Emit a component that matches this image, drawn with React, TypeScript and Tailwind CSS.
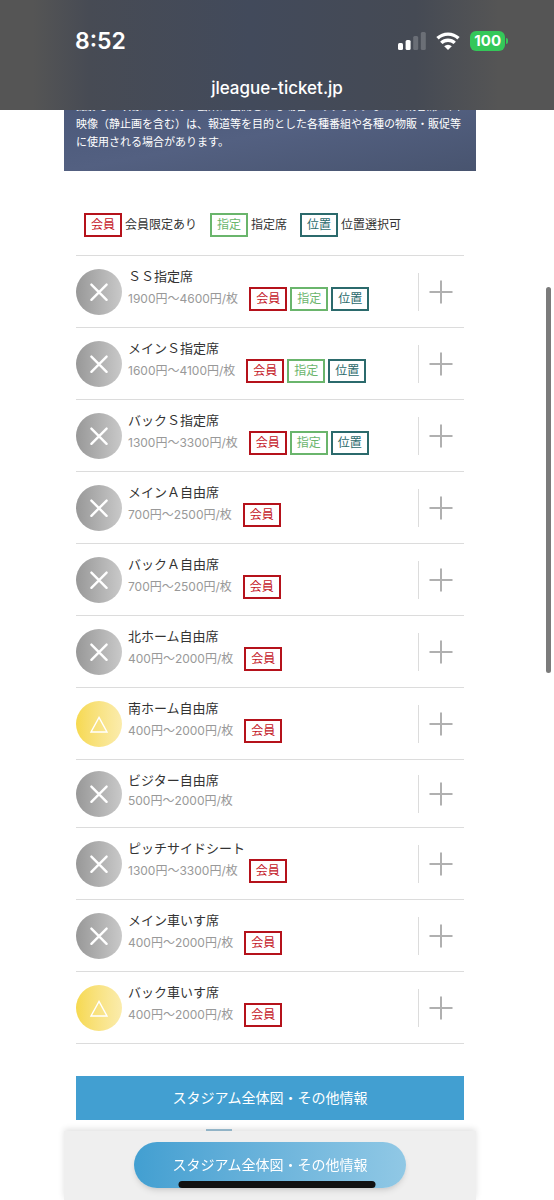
import React from "react";
import clsx from "clsx";

type Tag = "member" | "reserved" | "position";

type Seat = {
  name: string;
  price: string;
  tags: Tag[];
  few?: boolean;
};

const tagStyles: Record<Tag, { label: string; className: string }> = {
  member: { label: "会員", className: "border-[#b5121b] text-[#c4161f]" },
  reserved: { label: "指定", className: "border-[#6ab56c] text-[#6ab56c]" },
  position: { label: "位置", className: "border-[#2b6a6c] text-[#2b6a6c]" },
};

const legend: { tag: Tag; text: string }[] = [
  { tag: "member", text: "会員限定あり" },
  { tag: "reserved", text: "指定席" },
  { tag: "position", text: "位置選択可" },
];

const seats: Seat[] = [
  { name: "ＳＳ指定席", price: "1900円〜4600円/枚", tags: ["member", "reserved", "position"] },
  { name: "メインＳ指定席", price: "1600円〜4100円/枚", tags: ["member", "reserved", "position"] },
  { name: "バックＳ指定席", price: "1300円〜3300円/枚", tags: ["member", "reserved", "position"] },
  { name: "メインＡ自由席", price: "700円〜2500円/枚", tags: ["member"] },
  { name: "バックＡ自由席", price: "700円〜2500円/枚", tags: ["member"] },
  { name: "北ホーム自由席", price: "400円〜2000円/枚", tags: ["member"] },
  { name: "南ホーム自由席", price: "400円〜2000円/枚", tags: ["member"], few: true },
  { name: "ビジター自由席", price: "500円〜2000円/枚", tags: [] },
  { name: "ピッチサイドシート", price: "1300円〜3300円/枚", tags: ["member"] },
  { name: "メイン車いす席", price: "400円〜2000円/枚", tags: ["member"] },
  { name: "バック車いす席", price: "400円〜2000円/枚", tags: ["member"], few: true },
];

function TagBadge({ tag }: { tag: Tag }) {
  const { label, className } = tagStyles[tag];
  return (
    <span className={clsx("border-2 px-[5px] text-xs leading-5", className)}>
      {label}
    </span>
  );
}

function StatusIcon({ few }: { few?: boolean }) {
  return (
    <span
      className={clsx(
        "flex size-[46px] shrink-0 items-center justify-center rounded-full bg-linear-to-r",
        few ? "from-[#f6d94f] to-[#fbecac]" : "from-[#989898] to-[#c9c9c9]"
      )}
    >
      <svg
        viewBox="0 0 20 20"
        className="size-5"
        fill="none"
        stroke="white"
        strokeLinecap="round"
        aria-label={few ? "残りわずか" : "売り切れ"}
      >
        {few ? (
          <path d="M10 3.4 18 18H2Z" strokeWidth="1.4" />
        ) : (
          <path d="M2.4 2.6 17.6 17.8M17.6 2.6 2.4 17.8" strokeWidth="2.4" />
        )}
      </svg>
    </span>
  );
}

function SeatRow({ seat }: { seat: Seat }) {
  return (
    <li className="flex items-center border-b border-[#dcdcdc]">
      <StatusIcon few={seat.few} />
      <div className="min-w-0 flex-1 pt-[9px] pb-4 pl-[6px]">
        <h3 className="text-[13px] leading-[22px] text-[#333]">{seat.name}</h3>
        <div className="flex items-center gap-[3px]">
          <p className="mr-2 text-xs leading-5 text-[#999]">{seat.price}</p>
          {seat.tags.map((tag) => (
            <TagBadge key={tag} tag={tag} />
          ))}
        </div>
      </div>
      <button
        type="button"
        aria-label={`${seat.name}を開く`}
        className="flex h-[38px] w-[46px] shrink-0 items-center justify-center border-l border-[#dcdcdc] pr-0.5"
      >
        <svg viewBox="0 0 24 24" className="size-6" stroke="#b0b0b0" strokeWidth="2">
          <path d="M12 0.5v23M0.5 12h23" />
        </svg>
      </button>
    </li>
  );
}

function StatusBar() {
  return (
    <header className="sticky top-0 z-10 bg-[linear-gradient(to_right,#555_6%,#474b54_16%,#424a5b_45%,#454a54_75%,#555_90%)] pt-6 text-white">
      <div className="flex h-[34px] items-center justify-between pr-[46px] pl-[75px]">
        <time className="text-[23px] font-semibold">8:52</time>
        <div className="flex items-center gap-[10px]">
          <svg viewBox="0 0 28 18" className="h-[18px] w-7" fill="white">
            <rect x="0" y="11" width="5" height="7" rx="1.5" />
            <rect x="7.6" y="8" width="5" height="10" rx="1.5" />
            <rect x="15.2" y="4" width="5" height="14" rx="1.5" opacity=".2" />
            <rect x="22.8" y="0" width="5" height="18" rx="1.5" opacity=".2" />
          </svg>
          <svg viewBox="0 0 24 18" className="h-[18px] w-6" fill="none" stroke="white" strokeWidth="3.4">
            <path d="M1.5 6.3a15.2 15.2 0 0 1 21 0" />
            <path d="M5.3 10.9a9.6 9.6 0 0 1 13.4 0" />
            <path d="M12 18 8.2 14.2a5.4 5.4 0 0 1 7.6 0Z" fill="white" stroke="none" />
          </svg>
          <div className="flex items-center gap-px">
            <span className="rounded-md bg-[#34c759] px-1 text-[15px] leading-5 font-bold">100</span>
            <span className="h-[6px] w-[2px] rounded-r-full bg-[#34c759]" />
          </div>
        </div>
      </div>
      <p className="pt-[18px] pb-[10px] text-center text-[17px] leading-6 font-medium">jleague-ticket.jp</p>
    </header>
  );
}

export default function App() {
  return (
    <div className="min-h-dvh bg-white font-['Inter','Noto_Sans_CJK_JP',sans-serif]">
      <StatusBar />
      <main className="-mt-[15px] pr-[78px] pl-16">
        <div className="bg-linear-to-br from-[#4a5879] via-[#536081] to-[#48546f] px-3 pt-[2px] pb-5 text-[11px] leading-[18px] text-white">
          <p>
            撮影した映像・写真等が公衆に公開される場合があります。また、観客席の画
            <br />
            映像（静止画を含む）は、報道等を目的とした各種番組や各種の物販・販促等
            <br />
            に使用される場合があります。
          </p>
        </div>
        <div className="px-3">
          <ul className="flex flex-wrap gap-[13px] px-2 pt-[42px] pb-[18px]">
            {legend.map(({ tag, text }) => (
              <li key={tag} className="flex items-center gap-[3px] text-xs text-[#333]">
                <TagBadge tag={tag} />
                {text}
              </li>
            ))}
          </ul>
          <ul className="border-t border-[#dcdcdc]">
            {seats.map((seat) => (
              <SeatRow key={seat.name} seat={seat} />
            ))}
          </ul>
          <a
            href="#stadium"
            className="mt-8 block bg-[#429fd1] py-3 text-center text-sm leading-5 text-white"
          >
            スタジアム全体図・その他情報
          </a>
          <div className="mt-[9px] ml-[130px] h-[3px] w-[26px] bg-[#9fc3d8]" />
        </div>
      </main>
      <footer className="fixed inset-x-0 bottom-0 pr-[78px] pl-16">
        <div className="flex flex-col bg-[#efefef] px-[70px] pt-[11px] pb-3 shadow-[0_-2px_6px_rgba(0,0,0,0.12)]">
          <a
            href="#stadium"
            className="rounded-full bg-linear-to-r from-[#429fd1] to-[#90c8e5] py-3 text-center text-sm leading-[22px] text-white shadow-md"
          >
            スタジアム全体図・その他情報
          </a>
        </div>
        <div className="absolute bottom-3 left-1/2 h-[7px] w-[197px] -translate-x-1/2 rounded-full bg-[#111]" />
      </footer>
      <div className="fixed top-[287px] right-[3px] h-[386px] w-[5px] rounded-full bg-[#7b7b7b]" />
    </div>
  );
}
